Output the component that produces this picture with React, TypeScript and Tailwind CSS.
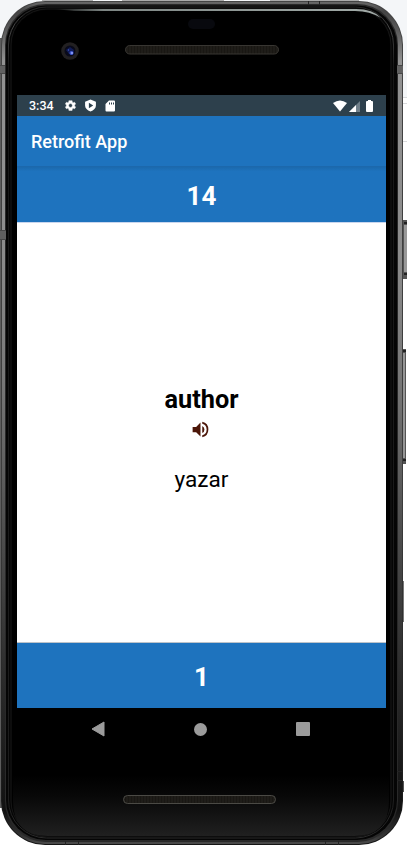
import React from "react";

function DeviceFrame() {
  return (
    <svg className="absolute inset-0" width="407" height="846" viewBox="0 0 407 846" aria-hidden="true">
      <defs>
        <linearGradient id="metal" x1="0" y1="0" x2="0" y2="1">
          <stop offset="0" stopColor="#686868" />
          <stop offset="0.012" stopColor="#444" />
          <stop offset="0.035" stopColor="#5c5c5c" />
          <stop offset="0.07" stopColor="#929292" />
          <stop offset="0.3" stopColor="#8c8c8c" />
          <stop offset="0.45" stopColor="#777" />
          <stop offset="0.62" stopColor="#505050" />
          <stop offset="0.8" stopColor="#2c2c2c" />
          <stop offset="0.96" stopColor="#111" />
          <stop offset="0.99" stopColor="#333" />
          <stop offset="1" stopColor="#4b4b4b" />
        </linearGradient>
        <linearGradient id="edge" x1="0" y1="0" x2="0" y2="1">
          <stop offset="0" stopColor="#444" />
          <stop offset="0.6" stopColor="#3c3c3c" />
          <stop offset="1" stopColor="#151515" />
        </linearGradient>
        <linearGradient id="rim" x1="0" y1="0" x2="0" y2="1">
          <stop offset="0" stopColor="#222" />
          <stop offset="0.025" stopColor="#484848" />
          <stop offset="0.07" stopColor="#181818" />
          <stop offset="0.95" stopColor="#1c1c1c" />
          <stop offset="1" stopColor="#2b2b2b" />
        </linearGradient>
        <linearGradient id="chin" x1="0" y1="0" x2="0" y2="1">
          <stop offset="0" stopColor="#000" />
          <stop offset="0.35" stopColor="#080808" />
          <stop offset="1" stopColor="#202020" />
        </linearGradient>
        <linearGradient id="shine" x1="0" y1="0" x2="1" y2="0">
          <stop offset="0" stopColor="#7d8583" stopOpacity="0" />
          <stop offset="0.15" stopColor="#7d8583" />
          <stop offset="1" stopColor="#a2aba8" />
        </linearGradient>
        <pattern id="mesh" width="3" height="6" patternUnits="userSpaceOnUse">
          <rect width="3" height="6" fill="#191713" />
          <path d="M1 0v6" stroke="#25221e" strokeWidth="1" />
        </pattern>
      </defs>
      <rect x="0" width="407" height="97" fill="#f4f6f8" />
      <path d="M42 .5H93M122 .5H224M270 .5H359" stroke="#aaa" />
      <path d="M400 97.5h7M400 103.5h7M400 141.5h7" stroke="#d9dadc" />
      <rect x="403" y="220" width="4" height="59" fill="#555" />
      <rect x="404" y="225" width="3" height="47" fill="#999" />
      <path d="M404 223h3M404 274h3" stroke="#222" strokeWidth="2" />
      <rect x="402" y="349" width="4" height="115" fill="#555" />
      <rect x="403" y="353" width="2" height="105" fill="#969696" />
      <path d="M402 351h4M402 460h4" stroke="#222" strokeWidth="2" />
      <rect x="403" y="581" width="1" height="41" fill="#777" />
      <path d="M403.500 781v11" stroke="#555" />
      <path d="M0 38h2v770h-2z" fill="#5c5c5c" />
      <rect x="1" y="1" width="402" height="844" rx="44" fill="url(#edge)" />
      <rect x="2" y="2" width="400" height="842" rx="43" fill="url(#metal)" />
      <rect x="5" y="4" width="393" height="838" rx="41" fill="#292929" />
      <rect x="6" y="5.500" width="391" height="834.500" rx="40" fill="#050505" />
      <rect x="8.500" y="7" width="385" height="831" rx="38" fill="none" stroke="url(#rim)" />
      <rect x="11" y="9" width="380" height="828" rx="36" fill="none" stroke="#161616" strokeWidth="1" />
      <rect x="12" y="10" width="378" height="826" rx="35" fill="#000" />
      <path d="M13 775H389V801Q389 836 354 836H48Q13 836 13 801Z" fill="url(#chin)" />
      <path d="M54 9h302q17 0 25 9q-11-7-26-7H74Z" fill="url(#shine)" />
      <path d="M0 69h5M0 235h6" stroke="#606060" strokeWidth="8" />
      <path d="M397 69h6" stroke="#606060" strokeWidth="8" />
      <path d="M0 65.500h5M0 73.500h5M397 65.500h6M397 73.500h6M0 230.500h6M0 239.500h6" stroke="#474747" />
      <path d="M397 771.500h5M397 780.500h5" stroke="#222" />
      <path d="M308.500 1v4M319.500 1v4M65.500 841v4M78.500 841v4M325.500 841v4M338.500 841v4" stroke="#242424" />
      <rect x="188" y="19" width="27" height="10" rx="5" fill="#08090e" />
      <circle cx="70" cy="51" r="8.800" fill="#222021" />
      <circle cx="70" cy="51" r="5.500" fill="#090a1a" />
      <path d="M66 50l4-3 4 3-1 5-4-1z" fill="#101b56" />
      <circle cx="71.500" cy="53" r="2" fill="#4059d0" />
      <circle cx="72" cy="53" r="1" fill="#99a9fc" />
      <circle cx="68.500" cy="50" r=".7" fill="#4059bd" />
      <rect x="125.500" y="45.500" width="153" height="8.500" rx="4.250" fill="url(#mesh)" stroke="#383632" />
      <rect x="123.500" y="795.500" width="152" height="8" rx="4" fill="url(#mesh)" stroke="#4b4a45" />
    </svg>
  );
}

function StatusBar() {
  return (
    <div className="flex h-[21px] shrink-0 items-center bg-[#2d404c] pl-3 text-white">
      <span className="w-[35px] pt-px text-[12.5px] leading-[20px] font-medium">3:34</span>
      <svg className="size-[13px]" viewBox="0 0 24 24" fill="currentColor">
        <path d="M19.400 13a7.500 7.500 0 0 0 0-2l2.100-1.600-2-3.500L17 7a8 8 0 0 0-1.700-1L15 3H9l-.3 3A8 8 0 0 0 7 7L4.500 5.900l-2 3.500L4.600 11a7.500 7.500 0 0 0 0 2l-2.100 1.600 2 3.500L7 17a8 8 0 0 0 1.700 1L9 21h6l.3-3a8 8 0 0 0 1.700-1l2.500 1.100 2-3.500zM12 15.500a3.500 3.500 0 1 1 0-7 3.500 3.500 0 0 1 0 7z" stroke="currentColor" strokeWidth=".8" />
      </svg>
      <svg className="ml-[7px] size-[13px]" viewBox="0 0 24 24" fill="currentColor">
        <path fillRule="evenodd" d="M12 1 2 5v7c0 5 4 9 10 11 6-2 10-6 10-11V5zM9 7l8 5-8 5z" />
      </svg>
      <svg className="ml-[8px] h-[12px] w-[10px]" viewBox="0 0 20 24" fill="currentColor">
        <path fillRule="evenodd" d="M18 1H8L1 8v13q0 2 2 2h15q2 0 2-2V3q0-2-2-2zM8 5h2v4H8zm4 0h2v4h-2zm4 0h2v4h-2z" />
      </svg>
      <div className="ml-auto flex items-center pr-[12px]">
        <svg width="14" height="12" viewBox="0 0 14 12">
          <path d="M0 3Q7-2 14 3L7 11.500z" fill="white" />
        </svg>
        <svg className="ml-[2px]" width="11" height="12" viewBox="0 0 11 12">
          <path d="M11 1v11H0z" fill="#71808a" />
          <path d="M7 5v7H0z" fill="white" />
        </svg>
        <svg className="ml-[5px]" width="9" height="12" viewBox="0 0 9 12">
          <path d="M3 0h3v1h1q1 0 1 1v9q0 1-1 1H2q-1 0-1-1V2q0-1 1-1h1z" fill="white" />
        </svg>
      </div>
    </div>
  );
}

function NavigationBar() {
  return (
    <nav className="flex h-[42px] shrink-0 items-center justify-between pr-[76px] pl-[74px]">
      <button aria-label="Back" className="flex">
        <svg width="14" height="16" viewBox="0 0 14 16"><path d="M13 1v14L1 8z" fill="#9b9b9b" stroke="#9b9b9b" strokeLinejoin="round" /></svg>
      </button>
      <button aria-label="Home" className="size-[13px] rounded-full bg-[#9b9b9b]" />
      <button aria-label="Recent apps" className="size-[14px] rounded-[1px] bg-[#9b9b9b]" />
    </nav>
  );
}

export default function App() {
  return (
    <div className="relative h-[846px] w-[407px] overflow-hidden bg-white font-[Roboto,sans-serif]">
      <DeviceFrame />
      <div className="relative flex h-full flex-col pt-[95px] pr-[21px] pl-[17px]">
        <StatusBar />
        <header className="flex h-[50px] shrink-0 items-center bg-[#1e73be] pt-px pl-[14px] text-[18px] font-medium text-white">
          Retrofit App
        </header>
        <div className="flex h-14 shrink-0 items-center justify-center border-t border-[#1c68ac] bg-linear-to-b from-[#1b69ad] via-[#1e73be] via-8% to-[#1e73be] pt-[3px] text-[26px] font-bold text-white">
          14
        </div>
        <main className="flex h-[421px] shrink-0 flex-col items-center border-y border-t-[#c9d6ee] border-b-[#bcc3ca] bg-white pt-[161px] text-black">
          <h1 className="text-[25.3px] leading-[32px] font-bold">author</h1>
          <button aria-label="Listen" className="mt-[3px] mr-[2px] flex">
            <svg width="21" height="21" viewBox="0 0 24 24" fill="#4c1608">
              <path d="M3 9v6h4l5 5V4L7 9zM16.500 12A4.500 4.500 0 0 0 14 7.970v8.050A4.480 4.480 0 0 0 16.500 12zM14 3.230v2.060a7 7 0 0 1 0 13.420v2.060a9 9 0 0 0 0-17.540z" />
            </svg>
          </button>
          <p className="mt-[24px] text-[22.6px] leading-[32px]">yazar</p>
        </main>
        <footer className="flex h-[65px] shrink-0 items-center justify-center bg-[#1e73be] pt-[3px] text-[26px] font-bold text-white">
          1
        </footer>
        <NavigationBar />
      </div>
    </div>
  );
}
